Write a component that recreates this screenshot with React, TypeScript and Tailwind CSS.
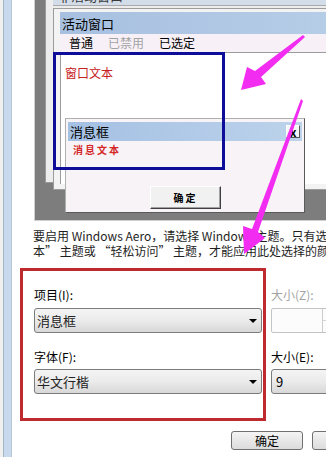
const cjk = "font-['Noto_Sans_CJK_SC',sans-serif]";

function Combo({ value }: { value: string }) {
  return (
    <div className="h-[25px] rounded-[3px] border border-[#7c7c7c] bg-gradient-to-b from-[#f4f4f4] via-[#ebebeb] to-[#d8d8d8] flex items-center justify-between pl-[2px] pr-[4px]">
      <span className="text-[13px] leading-none text-[#222]">{value}</span>
      <span className="w-0 h-0 border-l-[4px] border-r-[4px] border-t-[4px] border-l-transparent border-r-transparent border-t-black" />
    </div>
  );
}

function Preview() {
  return (
    <div className="relative ml-[22px] w-[330px] h-[221px] shrink-0 overflow-hidden border-l border-b border-[#cfcfcf] bg-[#7d7d7d]">
      {/* inactive window */}
      <div className="absolute left-[10px] top-[-22px] w-[400px] h-[205px] border border-[#9a9a9a] bg-[#ededed] pl-[7px]">
        <div className="h-[27px] bg-[#d3dde9] border-b border-[#a9a9a9] flex items-end pb-[2px] pl-[5px]">
          <span className="text-[13px] leading-[14px] text-[#3a3a3a]">非活动窗口</span>
        </div>
      </div>

      {/* active window */}
      <div className="absolute left-[18px] top-[8px] w-[400px] h-[182px] border border-[#9c9c9c] bg-[#f3f3f3] pl-[6px] pt-[3px] pb-[5px] flex flex-col">
        <div className="h-[22px] bg-gradient-to-r from-[#a7c0e0] to-[#bdd3ea] flex items-center pl-[2px]">
          <span className="text-[13px] leading-none">活动窗口</span>
        </div>
        <div className="h-[18px] bg-[#f7f1f7] flex items-center pl-[9px] gap-[15px] text-[12px] leading-none">
          <span>普通</span>
          <span className="text-[#a3a3a3]">已禁用</span>
          <span>已选定</span>
        </div>
        <div className="flex-1 bg-white border-t border-l border-[#9c9c9c] pl-[4px] pt-[6px]">
          <span className="text-[12px] leading-[14px] text-[#c62020]">窗口文本</span>
        </div>
      </div>

      {/* message box */}
      <div className="absolute left-[30px] top-[118px] w-[240px] h-[95px] border border-t-[#b0b0b0] border-l-[#b0b0b0] border-r-[#5a5a5a] border-b-[#5a5a5a] bg-[#f7f3f7] pl-[2px] pr-[2px] pt-[3px]">
        <div className="h-[19px] bg-gradient-to-r from-[#a4c0e3] to-[#bdd3eb] flex items-center justify-between pl-[2px] pr-[2px]">
          <span className="text-[13px] leading-none">消息框</span>
          <span className="w-[14px] h-[13px] bg-[#f6f6f6] border border-t-white border-l-white border-r-[#555] border-b-[#555] flex items-center justify-center text-[12px] font-bold leading-none">x</span>
        </div>
        <div className="pl-[5px] mt-[3px] text-[10px] leading-[12px] font-bold tracking-[2px] text-[#d42626]">消息文本</div>
        <div className="ml-[82px] mt-[30px] w-[71px] h-[23px] bg-[#f1f1f1] border border-t-white border-l-white border-r-[#404040] border-b-[#404040] shadow-[inset_-1px_-1px_0_#a0a0a0] flex items-center justify-center">
          <span className="text-[10px] font-bold leading-none tracking-[2px]">确定</span>
        </div>
      </div>

      {/* highlight rectangle */}
      <div className="absolute left-[18px] top-[52px] w-[172px] h-[118px] border-[3px] border-[#0d0d9a]" />
    </div>
  );
}

export default function App() {
  return (
    <div className={`relative w-[326px] h-[457px] overflow-hidden bg-white flex text-black ${cjk}`}>
      <div className="w-[3px] shrink-0 bg-[#f0f0f0]" />
      <div className="w-px shrink-0 bg-[#a7b4c4]" />
      <div className="w-[7px] shrink-0 bg-[#c8d9ee]" />
      <div className="w-px shrink-0 bg-[#b8c6d6]" />

      <main className="flex-1 min-w-0 overflow-hidden flex flex-col">
        <Preview />

        <p className="mt-[7px] ml-[21px] whitespace-nowrap text-[12px] leading-[15px] text-[#1e1e1e]">
          要启用 Windows Aero，请选择 Windows 主题。只有选择
          <br />
          本” 主题或 “轻松访问” 主题，才能应用此处选择的颜色设置。
        </p>

        <div className="flex mt-[10px] ml-[8px]">
          <div className="w-[246px] shrink-0 border-[3px] border-[#be2a2e] pl-[11px] pr-px pt-[16px] pb-[24px]">
            <div className="text-[12px] leading-[16px] mb-[5px]">项目(I):</div>
            <Combo value="消息框" />
            <div className="text-[12px] leading-[16px] mt-[16px] mb-[4px]">字体(F):</div>
            <Combo value="华文行楷" />
          </div>

          <div className="ml-[5px] pt-[19px] w-[80px] shrink-0">
            <div className="text-[12px] leading-[16px] mb-[5px] text-[#a3a3a3]">大小(Z):</div>
            <div className="h-[25px] rounded-[2px] border border-[#c4c4c4] bg-[#fcfcfc] flex">
              <div className="w-[50px]" />
              <div className="flex-1 border-l border-[#cdcdcd] flex items-center">
                <div className="w-full h-px bg-[#d6d6d6]" />
              </div>
            </div>
            <div className="text-[12px] leading-[16px] mt-[16px] mb-[4px]">大小(E):</div>
            <div className="h-[25px] rounded-[3px] border border-[#7c7c7c] bg-gradient-to-b from-[#f4f4f4] via-[#ebebeb] to-[#d8d8d8] flex items-center pl-[4px]">
              <span className="text-[13px] leading-none">9</span>
            </div>
          </div>
        </div>

        <div className="flex mt-[10px] ml-[219px] gap-[9px]">
          <div className="w-[72px] h-[19px] shrink-0 rounded-[3px] border border-[#707070] bg-gradient-to-b from-[#f4f4f4] to-[#dcdcdc] flex items-center justify-center text-[12px] leading-none">
            确定
          </div>
          <div className="w-[72px] h-[19px] shrink-0 rounded-[3px] border border-[#707070] bg-gradient-to-b from-[#f4f4f4] to-[#dcdcdc] flex items-center justify-center text-[12px] leading-none">
            取消
          </div>
        </div>
      </main>

      {/* annotation arrows */}
      <svg className="absolute left-0 top-0 pointer-events-none" width="326" height="457" viewBox="0 0 326 457">
        <polygon points="303,35 305,37 261,77 266,84 241,90 247,67 255,71" fill="#f22cf0" />
        <polygon points="301,99 303,101 258,232 265,238 244,254 243,226 252,229" fill="#f22cf0" />
      </svg>
    </div>
  );
}
